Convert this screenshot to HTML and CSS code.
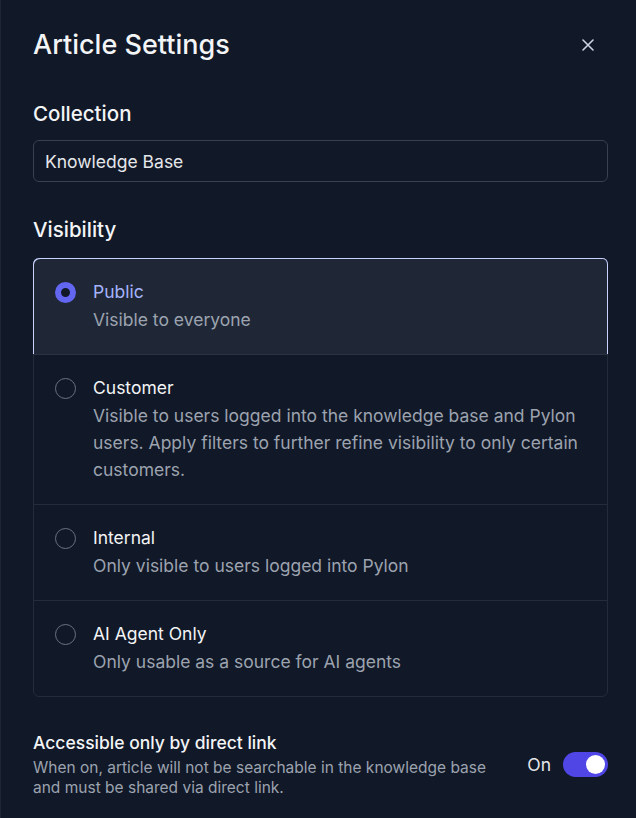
FILE: index.html
```html
<!DOCTYPE html>
<html lang="en">
<head>
<meta charset="utf-8">
<title>Article Settings</title>
<link rel="stylesheet" href="styles.css">
</head>
<body>
<div class="panel">
  <div class="header">
    <h1 class="title">Article Settings</h1>
    <button class="close" aria-label="Close">
      <svg width="12" height="12" viewBox="0 0 12 12"><path d="M1 1L11 11M11 1L1 11" stroke="#cbd5e1" stroke-width="1.6" stroke-linecap="round" fill="none"/></svg>
    </button>
  </div>

  <div class="label label-collection">Collection</div>
  <div class="input">Knowledge Base</div>

  <div class="label label-visibility">Visibility</div>
  <div class="options">
    <div class="option selected">
      <span class="radio checked"></span>
      <div class="option-text">
        <div class="option-title">Public</div>
        <div class="option-desc">Visible to everyone</div>
      </div>
    </div>
    <div class="option">
      <span class="radio"></span>
      <div class="option-text">
        <div class="option-title">Customer</div>
        <div class="option-desc">Visible to users logged into the knowledge base and Pylon users. Apply filters to further refine visibility to only certain customers.</div>
      </div>
    </div>
    <div class="option">
      <span class="radio"></span>
      <div class="option-text">
        <div class="option-title">Internal</div>
        <div class="option-desc">Only visible to users logged into Pylon</div>
      </div>
    </div>
    <div class="option">
      <span class="radio"></span>
      <div class="option-text">
        <div class="option-title">AI Agent Only</div>
        <div class="option-desc">Only usable as a source for AI agents</div>
      </div>
    </div>
  </div>

  <div class="link-row">
    <div class="link-text">
      <div class="link-title">Accessible only by direct link</div>
      <div class="link-desc">When on, article will not be searchable in the knowledge base and must be shared via direct link.</div>
    </div>
    <div class="toggle-wrap">
      <span class="toggle-label">On</span>
      <span class="toggle"><span class="knob"></span></span>
    </div>
  </div>
</div>
</body>
</html>
```

FILE: styles.css
```css
html, body {
  margin: 0;
  padding: 0;
  background: #111827;
}
body {
  font-family: Inter, "Noto Sans", sans-serif;
  color: #f3f4f6;
}
.panel {
  box-sizing: border-box;
  min-height: 818px;
  border-left: 1px solid #1e2636;
  padding: 29px 28px 20px 32px;
}
.header {
  display: flex;
  align-items: center;
  justify-content: space-between;
}
.title {
  margin: 0;
  font-size: 27px;
  line-height: 32px;
  font-weight: 500;
  color: #f3f4f6;
}
.close {
  background: none;
  border: 0;
  padding: 0;
  width: 12px;
  height: 12px;
  margin-right: 14px;
  display: flex;
}
.label {
  font-size: 20.5px;
  line-height: 28px;
  font-weight: 500;
  color: #f3f4f6;
}
.label-collection {
  margin-top: 39px;
}
.input {
  box-sizing: border-box;
  margin-top: 12px;
  height: 42px;
  border: 1px solid #374151;
  border-radius: 6px;
  padding: 0 11px;
  display: flex;
  align-items: center;
  font-size: 17.5px;
  color: #e5e7eb;
}
.label-visibility {
  margin-top: 34px;
}
.options {
  margin-top: 14px;
  border: 1px solid #232c3b;
  border-radius: 6px;
}
.option {
  display: flex;
  align-items: flex-start;
  gap: 17px;
  padding: 21px 20px 21px 21px;
  border-top: 1px solid #232c3b;
}
.option:first-child {
  border-top: 0;
}
.option.selected {
  background: #1f2737;
  border-radius: 6px 6px 0 0;
  box-shadow: inset 1px 1px 0 #c7d2fe, inset -1px 0 0 #c7d2fe;
  margin: -1px -1px 0 -1px;
  padding: 22px 21px 21px 22px;
  border-bottom: 1px solid #2a3344;
}
.option.selected + .option {
  border-top: 0;
}
.radio {
  box-sizing: border-box;
  flex: none;
  width: 21px;
  height: 21px;
  border-radius: 50%;
  border: 1px solid #6b7280;
  margin-top: 2px;
}
.radio.checked {
  border: 6.5px solid #6366f1;
  background: #111827;
}
.option-title {
  font-size: 17.5px;
  line-height: 24px;
  color: #f3f4f6;
}
.selected .option-title {
  color: #a5b4fc;
}
.option-desc {
  margin-top: 2px;
  font-size: 17.5px;
  line-height: 27px;
  color: #9ca3af;
}
.link-row {
  margin-top: 34px;
  display: flex;
  align-items: center;
  justify-content: space-between;
}
.link-title {
  font-size: 17.5px;
  line-height: 24px;
  font-weight: 500;
  color: #f3f4f6;
}
.link-desc {
  margin-top: 3px;
  font-size: 15.5px;
  line-height: 20px;
  color: #9ca3af;
  max-width: 465px;
}
.toggle-wrap {
  display: flex;
  align-items: center;
  gap: 12px;
}
.toggle-label {
  font-size: 17.5px;
  color: #e5e7eb;
}
.toggle {
  box-sizing: border-box;
  width: 45px;
  height: 25px;
  border-radius: 13px;
  background: #4f46e5;
  padding: 3px;
  display: flex;
  justify-content: flex-end;
}
.knob {
  width: 19px;
  height: 19px;
  border-radius: 50%;
  background: #ffffff;
}
```
